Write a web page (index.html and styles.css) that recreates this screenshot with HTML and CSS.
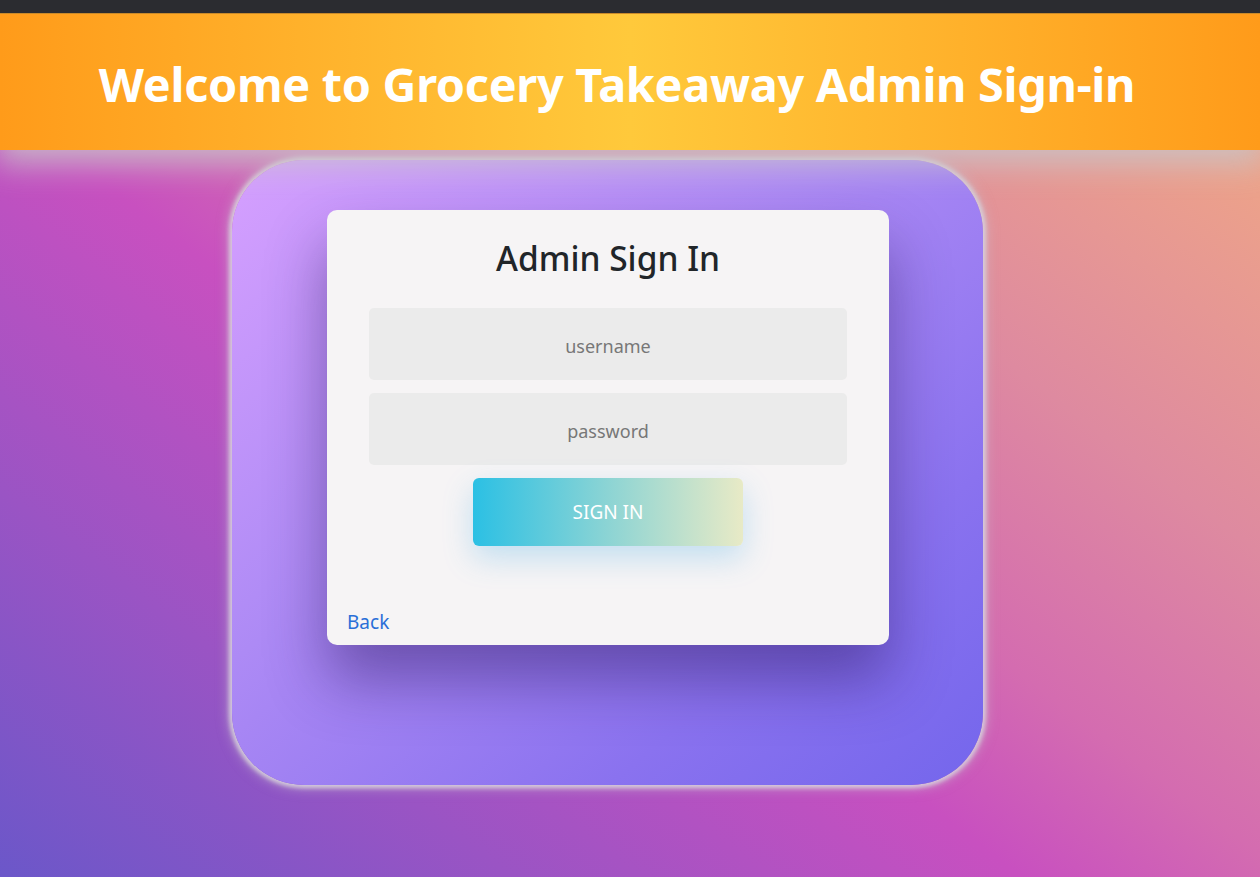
FILE: index.html
```html
<!DOCTYPE html>
<html lang="en">
<head>
<meta charset="utf-8">
<title>Grocery Takeaway Admin Sign-in</title>
<link rel="stylesheet" href="styles.css">
</head>
<body>
  <div class="topbar"></div>
  <header class="hero">
    <h1 class="hero-title">Welcome to Grocery Takeaway Admin Sign-in</h1>
  </header>
  <main class="stage">
    <section class="frame">
      <div class="card">
        <h2 class="card-title">Admin Sign In</h2>
        <form class="form">
          <input class="field" type="text" placeholder="username">
          <input class="field" type="password" placeholder="password">
          <button class="btn" type="button">SIGN IN</button>
        </form>
        <a class="back" href="#">Back</a>
      </div>
    </section>
  </main>
</body>
</html>
```
FILE: styles.css
```css
* { box-sizing: border-box; }
html, body { margin: 0; padding: 0; }
body {
  width: 1260px;
  height: 877px;
  overflow: hidden;
  font-family: "Noto Sans", "Open Sans", sans-serif;
  display: flex;
  flex-direction: column;
  background: #2b2c30;
}
.topbar {
  height: 14px;
  background: #2b2c30;
  border-bottom: 1px solid #c98a2a;
  flex: none;
  position: relative;
  z-index: 3;
}
.hero {
  height: 136px;
  flex: none;
  display: flex;
  align-items: center;
  justify-content: center;
  padding: 4px 26px 0 0;
  background: linear-gradient(to right, #ff9b1a 0%, #ffb52e 28%, #ffc93b 50%, #ffb52e 72%, #ff9b1a 100%);
  position: relative;
  z-index: 2;
  box-shadow: 0 10px 30px 4px rgba(200, 195, 200, 0.85);
}
.hero-title {
  margin: 0;
  color: #ffffff;
  font-size: 46.8px;
  font-weight: 700;
  letter-spacing: -0.3px;
}
.stage {
  flex: 1;
  background: linear-gradient(37deg, #6b57c9 0%, #9a54c4 23%, #c850c0 46%, #d46cb0 58%, #de8aa0 76%, #eea488 100%);
  padding: 10px 0 0 232px;
}
.frame {
  width: 751px;
  height: 625px;
  border-radius: 72px;
  background: linear-gradient(140deg, #d6a0ff 0%, #ad8af5 40%, #8a72ef 75%, #7466ec 100%);
  box-shadow: 0 0 4px 3px rgba(215, 210, 220, 0.9), 0 0 12px 4px rgba(200, 195, 210, 0.5);
  padding: 50px 0 0 95px;
}
.card {
  width: 562px;
  height: 435px;
  background: #f6f4f5;
  border-radius: 10px;
  box-shadow: 0 35px 60px 0 rgba(40, 20, 90, 0.45);
  display: flex;
  flex-direction: column;
  padding: 24px 20px 0 20px;
}
.card-title {
  margin: 0;
  text-align: center;
  font-size: 33.5px;
  font-weight: 500;
  color: #212529;
  line-height: 48px;
}
.form {
  margin-top: 26px;
  display: flex;
  flex-direction: column;
  align-items: center;
  gap: 13px;
}
.field {
  width: 478px;
  height: 72px;
  border: none;
  border-radius: 5px;
  background: #ebebeb;
  text-align: center;
  font-family: inherit;
  font-size: 18px;
  padding-top: 4px;
  color: #444;
  outline: none;
}
.field::placeholder { color: #777777; }
.btn {
  width: 270px;
  height: 68px;
  border: none;
  border-radius: 6px;
  background: linear-gradient(to right, #2bc0e4 0%, #8cd4d4 50%, #e8eac6 100%);
  color: #ffffff;
  font-family: inherit;
  font-size: 19px;
  box-shadow: 0 12px 30px rgba(60, 170, 230, 0.28);
}
.back {
  margin-top: auto;
  margin-bottom: 10px;
  color: #2a6fd8;
  text-decoration: none;
  font-size: 19px;
  line-height: 26px;
  align-self: flex-start;
}
```
